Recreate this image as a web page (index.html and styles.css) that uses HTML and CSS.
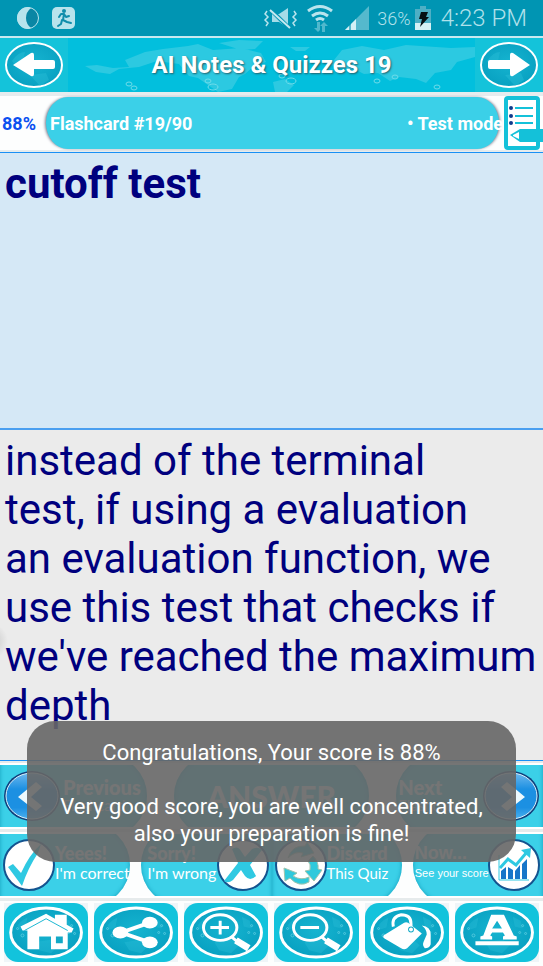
FILE: index.html
```html
<!DOCTYPE html>
<html lang="en">
<head>
<meta charset="utf-8">
<meta name="viewport" content="width=device-width, initial-scale=1">
<title>AI Notes &amp; Quizzes 19</title>
<link rel="stylesheet" href="styles.css">
</head>
<body>
<svg class="defs" aria-hidden="true">
  <defs>
    <radialGradient id="disc" cx="50%" cy="45%" r="60%"><stop offset="0" stop-color="#16b4d0"/><stop offset="1" stop-color="#079fc0"/></radialGradient>
    <linearGradient id="gloss" x1="0" y1="0" x2="0" y2="1"><stop offset="0" stop-color="#6db8ee"/><stop offset=".35" stop-color="#1c90e2"/><stop offset=".75" stop-color="#1c90e2"/><stop offset="1" stop-color="#4ab0ee"/></linearGradient>
    <symbol id="oval" viewBox="0 0 84 60">
      <ellipse cx="42" cy="30" rx="36" ry="25" fill="url(#disc)" stroke="#fff" stroke-width="3"/>
      <path d="M13 23q4-6 10-8l-2 10-6 2zM30 40l18-3 7 6-8 8-12-3zM58 14l8 4 2 8-8-2z" fill="#2dc0da" opacity=".35"/>
      <g fill="none" stroke="#6fd6e8" opacity=".7"><circle cx="13" cy="26" r="1"/><circle cx="18" cy="33" r="1.5"/><circle cx="68" cy="23" r="1"/><circle cx="71" cy="31" r="1"/><circle cx="65" cy="30" r="1"/></g>
    </symbol>
  </defs>
</svg>

<div class="status">
  <svg class="status-left" width="62" height="24" viewBox="0 0 62 24" aria-hidden="true">
    <circle cx="12" cy="12" r="10.500" fill="#0a86a4" stroke="#b8e3ec"/>
    <path d="M12 1a11 11 0 1 0 0 22 5 5 0 0 0 3-1q-5-4-5-10t5-10a5 5 0 0 0-3-1z" fill="#b8e3ec"/>
    <rect x="36" y="1" width="23" height="22" rx="5" fill="#b8e3ec"/>
    <g fill="none" stroke="#108dab" stroke-width="2" stroke-linecap="round" stroke-linejoin="round"><path d="M48 8l-1 6 4 2 4 1M46 14l-1 4-3 2M43 11l2-3h3l2 3 3-1"/></g>
    <circle cx="48" cy="5" r="2" fill="#108dab"/>
  </svg>
  <svg width="36" height="26" viewBox="0 0 36 26" aria-hidden="true">
    <path d="M9 9h7l9-6v20l-9-6H9z" fill="#a5dce8"/>
    <path d="M9 6l18 18" stroke="#0094b2" stroke-width="4"/>
    <path d="M7 5l20 18" stroke="#c5e9f0" stroke-width="2"/>
    <g fill="none" stroke="#b9e4ed" stroke-width="1.500"><path d="M4 6L2 9l3 3-3 3 3 3-2 3M31 6l2 3-3 3 3 3-3 3 2 3"/></g>
  </svg>
  <svg width="26" height="28" viewBox="0 0 26 28" aria-hidden="true">
    <g fill="none" stroke="#b9e4ed" stroke-width="3"><path d="M1 7q12-9 24 0M5 12q8-6 16 0M9 16q4-3 8 0"/></g>
    <path d="M10 18v6H7l4 4 2-2v-8zM15 28v-6h-2l4-4 4 4h-3v6z" fill="#4fb8cd"/>
  </svg>
  <svg class="signal" width="24" height="26" viewBox="0 0 24 26" aria-hidden="true">
    <path d="M24 1v24H0z" fill="#55b9cd"/><path d="M0 25l4-4v4zM6 25v-6l5-5v11z" fill="#d4f0f5"/>
  </svg>
  <span class="battery-text">36%</span>
  <svg width="16" height="26" viewBox="0 0 16 26" aria-hidden="true">
    <path d="M5 1h6v3h5v21H0V4h5z" fill="#4eafc5"/><path d="M0 18h16v7H0z" fill="#d6f1f5"/><path d="M6 7h7l-2 5h3L5 22l2-8H4z" fill="#061014"/>
  </svg>
  <span class="clock">4:23 PM</span>
</div>

<header class="header">
  <svg class="map" viewBox="0 0 407 54" preserveAspectRatio="none" aria-hidden="true">
    <path d="M17 28l12-1 16 3 16-1-4-7 20-8 18-3 25-3 10-2 15 6 28-2 20 5 5 9-12 4-9 8-6 3-7 12-14 3-20-14-9-2-10-12-22-3-18 6-20 2-9 5-14-2zM151 5l20-3 24 1-8 8-14 1zM222 9h20l-5 4h-9zM205 44l12-3 9 6-7 7h-12zM262 27l12-15 20-4 22 4 22-5 45 3 24-1v10l-18 5-6 8-16 3-9 10-10-4-17-2-9 4-12-8-14 1-8-4z" fill="#2cc9e1"/>
    <g fill="none" stroke="#6edcea"><ellipse cx="61" cy="46" rx="3" ry="2"/><ellipse cx="66" cy="50" rx="3" ry="2"/><ellipse cx="140" cy="43" rx="3" ry="2"/><ellipse cx="145" cy="49" rx="5" ry="3"/><ellipse cx="214" cy="38" rx="3" ry="2"/><ellipse cx="223" cy="43" rx="5" ry="3"/><ellipse cx="309" cy="43" rx="3" ry="2"/><ellipse cx="327" cy="39" rx="3" ry="2"/><ellipse cx="369" cy="49" rx="3" ry="2"/></g>
  </svg>
  <button class="arrow" aria-label="Back"><svg width="68" height="54" viewBox="0 0 68 54"><ellipse cx="34" cy="27" rx="28" ry="22" fill="url(#disc)" stroke="#fff" stroke-width="2"/><path d="M12 23q6-9 13-9l-2 9-8 4zM30 37l16-2 3 7-9 6z" fill="#2dc0da" opacity=".4"/><path d="M13 27l18-12q3-1 3 2v5h19q2 0 2 2v5q0 2-2 2H34v5q0 3-3 2z" fill="#fff"/></svg></button>
  <h1>AI Notes &amp; Quizzes 19</h1>
  <button class="arrow" aria-label="Forward"><svg width="68" height="54" viewBox="0 0 68 54"><ellipse cx="34" cy="27" rx="28" ry="22" fill="url(#disc)" stroke="#fff" stroke-width="2"/><path d="M12 23q6-9 13-9l-2 9-8 4zM30 37l16-2 3 7-9 6z" fill="#2dc0da" opacity=".4"/><path d="M55 27L38 15q-3-1-3 2v5H15q-2 0-2 2v5q0 2 2 2h20v5q0 3 3 2z" fill="#fff"/></svg></button>
</header>

<div class="info">
  <span class="percent">88%</span>
  <div class="pill"><span>Flashcard #19/90</span><span class="mode">• Test mode</span></div>
  <button class="list" aria-label="Quiz list"><svg width="40" height="54" viewBox="0 0 40 54"><rect x="3" y="2" width="32" height="50" rx="2" fill="#fff" stroke="#14c1d9" stroke-width="4"/><path d="M12 12h18M12 20h18M12 27h18" stroke="#14c1d9" stroke-width="2"/><g fill="#103a8c"><circle cx="8" cy="12" r="2"/><circle cx="8" cy="20" r="2"/><circle cx="8" cy="27" r="2"/></g><path d="M17 33h23v13H17L7 39z" fill="#14c1d9"/><path d="M16 36v7l-6-3v-1z" fill="#fff"/></svg></button>
</div>

<main class="card">
  <section class="question">cutoff test</section>
  <section class="answer">instead of the terminal<br>test, if using a evaluation<br>an evaluation function, we<br>use this test that checks if<br>we've reached the maximum<br>depth</section>
</main>

<nav class="nav">
  <button class="tab round-right previous"><svg width="58" height="54" viewBox="0 0 58 54" aria-hidden="true"><ellipse cx="29" cy="27" rx="28" ry="25" fill="#103f7c"/><ellipse cx="29" cy="27" rx="26" ry="23" fill="url(#gloss)" stroke="#d9f2fc"/><path d="M33 13l6 5-11 10 11 9-6 5-18-14z" fill="#eef9fd"/></svg><span class="label"><strong>Previous</strong><small>Flashcard</small></span></button>
  <button class="tab round-left round-right reveal"><strong>ANSWER</strong></button>
  <button class="tab round-left next"><span class="label"><strong>Next</strong><small>Flashcard</small></span><svg width="58" height="54" viewBox="0 0 58 54" aria-hidden="true"><ellipse cx="29" cy="27" rx="28" ry="25" fill="#103f7c"/><ellipse cx="29" cy="27" rx="26" ry="23" fill="url(#gloss)" stroke="#d9f2fc"/><path d="M25 13l-6 5 11 10-11 9 6 5 18-14z" fill="#eef9fd"/></svg></button>
</nav>

<div class="choices">
  <div class="pair verdict">
    <button class="tab round-right"><svg width="52" height="52" viewBox="0 0 52 52" aria-hidden="true"><circle cx="26" cy="26" r="25" fill="#fff" stroke="#14538f" stroke-width="2"/><path d="M5 28l5-3 8 9Q26 16 38 5l-3 9Q25 29 19 47z" fill="#2fc9e2"/></svg><span class="label"><strong>Yeees!</strong><span>I'm correct</span></span></button>
    <button class="tab round-left end"><span class="label"><strong>Sorry!</strong><span>I'm wrong</span></span><svg width="52" height="52" viewBox="0 0 52 52" aria-hidden="true"><circle cx="26" cy="26" r="25" fill="#fff" stroke="#14538f" stroke-width="2"/><path d="M15 10q6-4 9 2l4 6 7-8q6-3 10 1L33 26l6 11q-6 6-11 0l-4-6-8 10q-5 4-9 1l14-18z" fill="#2fc9e2"/></svg></button>
  </div>
  <div class="pair">
    <button class="tab round-right"><svg width="52" height="52" viewBox="0 0 52 52" aria-hidden="true"><circle cx="26" cy="26" r="25" fill="#fff" stroke="#14538f" stroke-width="2"/><g fill="#2fc9dc" stroke="#9fc4ae"><path d="M13 19q4-13 17-12l2-4 7 11-13 4 2-4q-8-2-15 5z"/><path d="M38 17q6 6 5 13l4 1-8 11-9-10 5-1q1-6-2-9z"/><path d="M34 43q-10 6-19-4l-5 3-1-13 13 5-4 3q8 5 16 1z"/></g></svg><span class="label"><strong>Discard</strong><span>This Quiz</span></span></button>
    <button class="tab round-left end score"><span class="label"><strong>Now...</strong><span>See your score</span></span><svg width="52" height="52" viewBox="0 0 52 52" aria-hidden="true"><circle cx="26" cy="26" r="25" fill="#fff" stroke="#14538f" stroke-width="2"/><path d="M11 16v25h30" fill="none" stroke="#2fc9e2"/><path d="M13 40v-8l5-4v12zM20 40V28l5 3v9zM27 40v-8l5-6v14zM34 40V25l5-5v20z" fill="#1675c9"/><path d="M12 29l8-9 8 6 11-13" fill="none" stroke="#2fc9e2" stroke-width="3"/><path d="M33 11l10-2-1 10z" fill="#2fc9e2"/></svg></button>
  </div>
</div>

<footer class="tools">
  <button aria-label="Home"><svg viewBox="0 0 84 60"><use href="#oval"/><path d="M16 24L42 11l9 5v-4h12v10l7 4-2 4h-4v17H47V34H35v13H23V28h-5z" fill="#fff"/><path d="M20 28l22-12 22 12" fill="none" stroke="#19b7d1" stroke-width="1"/><path d="M52 34h7v7h-7z" fill="#12a9c6"/></svg></button>
  <button aria-label="Share"><svg viewBox="0 0 84 60"><use href="#oval"/><path d="M56 20L27 30l29 10" fill="none" stroke="#fff" stroke-width="4"/><g fill="#fff"><ellipse cx="26" cy="30" rx="8" ry="6"/><ellipse cx="56" cy="20" rx="8" ry="6"/><ellipse cx="56" cy="40" rx="8" ry="6"/></g></svg></button>
  <button aria-label="Zoom in"><svg viewBox="0 0 84 60"><use href="#oval"/><ellipse cx="36" cy="25" rx="17" ry="13" fill="none" stroke="#fff" stroke-width="3"/><path d="M26 25h19M36 18v14" stroke="#fff" stroke-width="3"/><path d="M47 34l6 5" stroke="#fff" stroke-width="3"/><path d="M52 38l13 8" stroke="#fff" stroke-width="7"/></svg></button>
  <button aria-label="Zoom out"><svg viewBox="0 0 84 60"><use href="#oval"/><ellipse cx="36" cy="25" rx="17" ry="13" fill="none" stroke="#fff" stroke-width="3"/><path d="M26 25h19" stroke="#fff" stroke-width="3"/><path d="M47 34l6 5" stroke="#fff" stroke-width="3"/><path d="M52 38l13 8" stroke="#fff" stroke-width="7"/></svg></button>
  <button aria-label="Fill colour"><svg viewBox="0 0 84 60"><use href="#oval"/><path d="M18 33l21-13q2-1 4 0l14 11-15 15q-3 2-6 0L19 36q-2-1-1-3z" fill="#fff"/><path d="M28 24q-2-10 8-12 10 0 10 9v5" fill="none" stroke="#fff" stroke-width="3"/><circle cx="46" cy="27" r="3" fill="#13aac6"/><circle cx="46" cy="27" r="2" fill="#fff"/><path d="M57 23q9 1 9 9v10q-1 4-6 4-3-3-1-7l3-7q0-5-5-9z" fill="#fff"/></svg></button>
  <button aria-label="Text style"><svg viewBox="0 0 84 60"><use href="#oval"/><path d="M36 12h13l10 21 3 1v3H48v-3l2-1-2-3H37l-2 3 2 1v3H25v-3l3-1zM42 18l-5 8h10z" fill="#fff" fill-rule="evenodd"/><path d="M20 39h44v4H20z" fill="#fff"/></svg></button>
</footer>

<div class="toast" role="status"><p>Congratulations, Your score is 88%</p><p>Very good score, you are well concentrated,<br>also your preparation is fine!</p></div>
</body>
</html>
```
FILE: styles.css
```css
* { box-sizing: border-box; }

body {
  margin: 0;
  min-height: 100vh;
  display: flex;
  flex-direction: column;
  position: relative;
  overflow-x: hidden;
  background: #fdfefe;
  font-family: Roboto, "Liberation Sans", sans-serif;
}

button {
  border: 0;
  padding: 0;
  margin: 0;
  background: none;
  color: inherit;
  font: inherit;
  text-align: left;
}

svg { display: block; flex: none; }
.defs { position: absolute; width: 0; height: 0; }

.status {
  display: flex;
  align-items: center;
  gap: 8px;
  height: 38px;
  padding: 0 16px;
  background: #0095b3;
  border-bottom: 2px solid #c8e9f0;
  color: #b0e1eb;
  font-weight: 300;
}
.status-left { margin-right: auto; }
.signal { margin-left: 4px; }
.battery-text { font-size: 18px; margin-right: -4px; }
.clock { font-size: 24px; margin-left: 2px; }

.header {
  position: relative;
  display: flex;
  align-items: center;
  justify-content: space-between;
  height: 54px;
  background: #02bfdd;
}
.header .map {
  position: absolute;
  top: 0;
  left: 68px;
  width: calc(100% - 136px);
  height: 54px;
}
.header h1 {
  position: relative;
  margin: 0;
  font-size: 24px;
  line-height: 56px;
  font-weight: 700;
  color: #fff;
  text-shadow: 1px 1px 2px #24606c;
}
.arrow { position: relative; background: #14c3da; }

.info {
  display: flex;
  align-items: center;
  height: 60px;
  border-top: 4px solid #e6ecee;
  border-bottom: 2px solid #e6ecee;
  font-size: 18px;
  font-weight: 700;
}
.percent { width: 46px; padding-left: 2px; color: #0b50f0; }
.pill {
  flex: 1;
  display: flex;
  align-items: center;
  justify-content: space-between;
  height: 52px;
  padding: 0 0 0 4px;
  border-radius: 22px / 26px;
  background: #3bd0e8;
  box-shadow: -2px 0 3px -1px #778, 2px 0 3px -1px #778;
  color: #fff;
  white-space: nowrap;
}
.mode { margin-right: -4px; }
.list { position: relative; margin-left: 4px; }

.card { flex: 1; display: flex; flex-direction: column; color: #00007e; font-size: 42px; line-height: 49px; }
.question {
  flex: 1;
  padding: 6px 5px;
  border-top: 1px solid #1a90f5;
  background: #d5e8f6;
  font-weight: 700;
}
.answer {
  padding: 6px 0 30px 5px;
  border-top: 2px solid #4a9ff0;
  border-bottom: 1px solid #1a90f5;
  background: radial-gradient(circle at -10px 64%, #c4c4c4, #ebebeb 18px);
  white-space: nowrap;
}

.nav, .choices { display: grid; border: solid #fff; border-width: 2px 0; outline: 2px solid #e6ebec; height: 66px; }
.nav { grid-template-columns: 3fr 4fr 3fr; gap: 27px; margin-top: 2px; }
.choices { grid-template-columns: 1fr 1fr; margin: 3px 0 2px; }
.pair { display: grid; grid-template-columns: 1fr 1fr; gap: 11px; }

.tab {
  position: relative;
  z-index: 0;
  display: flex;
  align-items: center;
  overflow: hidden;
  padding: 0 3px;
  color: #fff;
  font-family: Lato, "Open Sans", sans-serif;
  white-space: nowrap;
}
.tab::before {
  content: "";
  position: absolute;
  z-index: -1;
  inset: -10px 0;
  background: #3bd0e8;
  box-shadow: inset 0 0 4px #159fbc;
}
.round-right::before { border-radius: 0 42px 42px 0; }
.round-left::before { border-radius: 42px 0 0 42px; }
.round-left.round-right::before { border-radius: 42px; }
.label { display: flex; flex-direction: column; font-size: 15px; line-height: 18px; }
.label strong { font-size: 20px; font-weight: 900; }
.label small { font-size: 15px; }
.verdict .label { font-size: 16px; }
.choices .label strong { font-size: 18px; margin-bottom: 2px; }
.choices .label { margin-bottom: 4px; }
.previous { gap: 2px; }
.end, .next { justify-content: space-between; padding-left: 6px; }
.next { padding-left: 2px; }
.score { padding: 0 3px 0 2px; }
.score .label { font-family: "Liberation Sans", sans-serif; font-size: 11px; }
.score svg { margin-left: -3px; }
.reveal { justify-content: center; }
.reveal strong { font-size: 30px; font-weight: 900; }

.tools {
  display: grid;
  grid-template-columns: repeat(6, 1fr);
  gap: 6px;
  padding: 2px 4px 4px;
  border-top: 1px solid #e6ebec;
}
.tools button { background: #eff5f8; }
.tools svg { width: 100%; height: 59px; border-radius: 14px; background: #12c3dc; }

.toast {
  position: absolute;
  right: 27px;
  bottom: 104px;
  left: 27px;
  padding: 18px 24px 15px;
  border-radius: 28px;
  background: rgba(102, 102, 102, 0.9);
  color: #fff;
  font-size: 22px;
  line-height: 27px;
  text-align: center;
}
.toast p { margin: 0 0 27px; }
.toast p:last-child { margin: 0; }
```
